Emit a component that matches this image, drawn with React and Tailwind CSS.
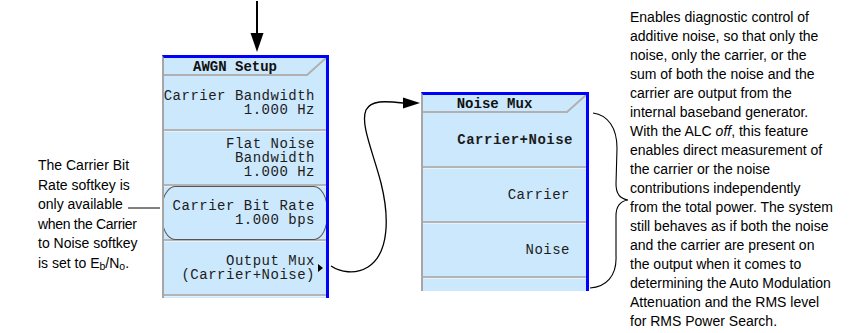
import clsx from "clsx";

const monoFont = "font-['Liberation_Mono','DejaVu_Sans_Mono',monospace]";

const MenuHeader = ({ title, width }) => (
  <div className="relative h-[18px]">
    <svg className="absolute left-0 top-0" width={width} height={18}>
      <polyline points={`0,17 ${width - 19},17 ${width},0`} fill="none" stroke="#b0b0b0" strokeWidth="2" />
    </svg>
    <div className="relative pr-[20px] text-center font-bold text-[14px] leading-[18px] text-[#111]">{title}</div>
  </div>
);

const Softkey = ({ lines = [], bold, pad = "pr-[11px]", children }) => (
  <div className="relative">
    <div
      className={clsx(
        "relative h-[52px] flex flex-col justify-center items-end leading-[14px] text-[14px] tracking-[0.5px] text-[#1c1c1c]",
        pad,
        bold && "font-bold"
      )}
    >
      {lines.map((line) => (
        <span key={line} className="whitespace-pre">
          {line}
        </span>
      ))}
      {children}
    </div>
    <div className="h-[2px] bg-[#b4b4b4]" />
    <div className="h-px bg-[#e4f2fd]" />
  </div>
);

const rightText = [
  "Enables diagnostic control of",
  "additive noise, so that only the",
  "noise, only the carrier, or the",
  "sum of both the noise and the",
  "carrier are output from the",
  "internal baseband generator.",
  null,
  "enables direct measurement of",
  "the carrier or the noise",
  "contributions independently",
  "from the total power. The system",
  "still behaves as if both the noise",
  "and the carrier are present on",
  "the output when it comes to",
  "determining the Auto Modulation",
  "Attenuation and the RMS level",
  "for RMS Power Search.",
];

export default function App() {
  return (
    <div className="relative w-[862px] h-[333px] bg-white overflow-hidden flex items-start font-['Liberation_Sans',Arial,sans-serif] text-black">
      {/* left note */}
      <div className="ml-[38px] mt-[156px] w-[90px] text-[14px] leading-[19.5px] whitespace-nowrap">
        <div>The Carrier Bit</div>
        <div>Rate softkey is</div>
        <div>only available</div>
        <div className="tracking-[-0.3px]">when the Carrier</div>
        <div>to Noise softkey</div>
        <div>
          is set to E<sub>b</sub>/N<sub>o</sub>.
        </div>
      </div>

      {/* AWGN Setup menu */}
      <div
        className={clsx(
          "ml-[34px] mt-[55px] w-[167px] h-[243px] overflow-hidden bg-[#cce8fc] border-t-[3px] border-t-[#0000ff] border-r-[3px] border-r-[#0000ff] border-l-2 border-l-[#a6a6a6]",
          monoFont
        )}
      >
        <MenuHeader title="AWGN Setup" width={162} />
        <div className="h-px" />
        <Softkey lines={["Carrier Bandwidth", "1.000 Hz"]} />
        <Softkey lines={["Flat Noise", "Bandwidth", "1.000 Hz"]} />
        <Softkey lines={["Carrier Bit Rate", "1.000 bps"]}>
          <div className="absolute -left-[3px] -right-[2px] -top-[1px] -bottom-[1px] rounded-[14px/26px] border border-[#555]" />
        </Softkey>
        <Softkey lines={["Output Mux", "(Carrier+Noise)"]}>
          <div className="absolute right-[3px] top-[22px] w-0 h-0 border-y-[4px] border-y-transparent border-l-[5px] border-l-black" />
        </Softkey>
        <Softkey lines={[]} />
      </div>

      {/* Noise Mux menu */}
      <div
        className={clsx(
          "ml-[92px] mt-[92px] w-[168px] h-[199px] overflow-hidden bg-[#cce8fc] border-t-[3px] border-t-[#0000ff] border-r-[3px] border-r-[#0000ff] border-l-2 border-l-[#a6a6a6]",
          monoFont
        )}
      >
        <MenuHeader title="Noise Mux" width={163} />
        <div className="h-px" />
        <Softkey lines={["Carrier+Noise"]} bold pad="pr-[13px]" />
        <Softkey lines={["Carrier"]} pad="pr-[16px]" />
        <Softkey lines={["Noise"]} pad="pr-[16px]" />
        <Softkey lines={[]} />
      </div>

      {/* right description */}
      <div className="ml-[41px] mt-[8px] text-[14px] leading-[19px] whitespace-nowrap">
        {rightText.map((line, i) =>
          line === null ? (
            <div key={i}>
              With the ALC <i>off</i>, this feature
            </div>
          ) : (
            <div key={i}>{line}</div>
          )
        )}
      </div>

      {/* callout lines */}
      <svg className="absolute left-0 top-0 pointer-events-none" width="862" height="333">
        <line x1="257" y1="1" x2="257" y2="36" stroke="black" strokeWidth="2" />
        <polygon points="250.5,33 263.5,33 257,52" fill="black" />
        <line x1="128" y1="208" x2="160" y2="208" stroke="black" strokeWidth="1" />
        <path
          d="M 331 266 C 340 272, 355 275, 368 267 C 390 253, 389 215, 381 183 C 373 152, 360 124, 366 110 C 371 100, 385 101, 403 103"
          fill="none"
          stroke="black"
          strokeWidth="1.3"
        />
        <polygon points="403,97.5 420,103 403,108.5" fill="black" />
        <path
          d="M 593 113 C 608 115, 617 128, 617 148 L 616 184 C 616 195, 621 199, 628 200 C 621 201, 616 206, 616 216 L 616 256 C 617 276, 606 287, 590 288"
          fill="none"
          stroke="black"
          strokeWidth="1.1"
        />
      </svg>
    </div>
  );
}
